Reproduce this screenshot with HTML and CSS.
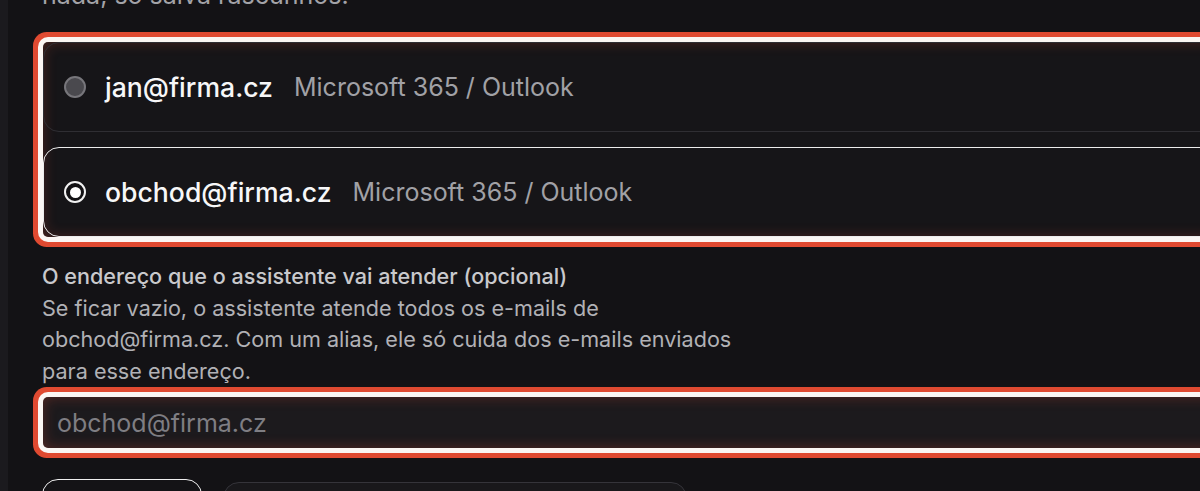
FILE: index.html
```html
<!DOCTYPE html>
<html lang="pt">
<head>
<meta charset="utf-8">
<title>Caixa de e-mail</title>
<link rel="stylesheet" href="styles.css">
</head>
<body>
<div class="layout">
  <div class="rail"></div>
  <main class="content">
    <p class="intro">nada, só salva rascunhos.</p>

    <div class="radio-group" role="radiogroup">
      <label class="option">
        <span class="radio"></span>
        <span class="email">jan@firma.cz</span>
        <span class="provider">Microsoft 365 / Outlook</span>
      </label>
      <label class="option option-selected">
        <span class="radio radio-on"><span class="dot"></span></span>
        <span class="email">obchod@firma.cz</span>
        <span class="provider">Microsoft 365 / Outlook</span>
      </label>
    </div>

    <div class="field">
      <div class="field-label">O endereço que o assistente vai atender (opcional)</div>
      <p class="field-help">Se ficar vazio, o assistente atende todos os e-mails de obchod@firma.cz. Com um alias, ele só cuida dos e-mails enviados para esse endereço.</p>
      <div class="input"><span class="placeholder">obchod@firma.cz</span></div>
    </div>

    <div class="actions">
      <button class="btn btn-primary" type="button"></button>
      <button class="btn btn-secondary" type="button"></button>
    </div>
  </main>
</div>
</body>
</html>
```

FILE: styles.css
```css
html, body {
  margin: 0;
  padding: 0;
  overflow: hidden;
  background: #131215;
  height: 100%;
}

body {
  font-family: Inter, "Noto Sans", "Liberation Sans", sans-serif;
  color: #f4f4f5;
}

.layout {
  display: flex;
  min-height: 100%;
}

.rail {
  width: 8px;
  flex: none;
  background: #1b1a1e;
}

.content {
  flex: none;
  width: 1320px;
  padding-left: 35px;
}

.intro {
  margin: -21px 0 0 -1px;
  font-size: 25px;
  line-height: 33px;
  color: #a3a3a8;
}

.radio-group {
  margin-top: 30px;
  display: flex;
  flex-direction: column;
  gap: 15px;
  border-radius: 5px;
  background: #161518;
  box-shadow: 0 0 0 5px #fbf6f3, 0 0 0 10px #e04a31, inset 0 0 14px rgba(224, 74, 49, 0.28);
}

.option {
  height: 90px;
  box-sizing: border-box;
  display: flex;
  align-items: center;
  padding-left: 20px;
  border: 1px solid #2f2e33;
  border-radius: 16px;
}

.option-selected {
  border: 1.5px solid #ececec;
}

.radio {
  width: 22px;
  height: 22px;
  box-sizing: border-box;
  border-radius: 50%;
  border: 2px solid #77767b;
  background: #4a494e;
  flex: none;
  display: flex;
  align-items: center;
  justify-content: center;
}

.radio-on {
  border: 2.5px solid #f2f2f2;
  background: #121114;
}

.dot {
  width: 11px;
  height: 11px;
  border-radius: 50%;
  background: #ffffff;
}

.email {
  margin-left: 19px;
  font-size: 26.6px;
  font-weight: 450;
  color: #f7f7f8;
}

.provider {
  margin-left: 21px;
  font-size: 25px;
  color: #a1a1a6;
}

.field {
  margin-top: 24px;
}

.field-label {
  margin-left: -1px;
  font-size: 21.6px;
  line-height: 31.5px;
  font-weight: 450;
  color: #c9c9cc;
}

.field-help {
  margin: 0 0 0 -1px;
  max-width: 712px;
  font-size: 21.6px;
  line-height: 31.5px;
  color: #b1b1b5;
}

.input {
  margin-top: 10px;
  height: 51px;
  display: flex;
  align-items: center;
  padding-left: 14px;
  border-radius: 5px;
  background: #1c1a1d;
  box-shadow: 0 0 0 5px #fbf6f3, 0 0 0 10px #e04a31, inset 0 0 14px rgba(224, 74, 49, 0.3);
}

.placeholder {
  font-size: 25px;
  color: #7f7e83;
}

.actions {
  margin-top: 31px;
  display: flex;
  align-items: flex-start;
  gap: 21px;
  margin-left: -1px;
}

.btn {
  height: 60px;
  border-radius: 16px;
  padding: 0;
  font: inherit;
}

.btn-primary {
  width: 160px;
  background: #141316;
  border: 1.5px solid #f0f0f0;
}

.btn-secondary {
  margin-top: 3px;
  width: 464px;
  background: #19181b;
  border: 1.5px solid #35343a;
}
```
